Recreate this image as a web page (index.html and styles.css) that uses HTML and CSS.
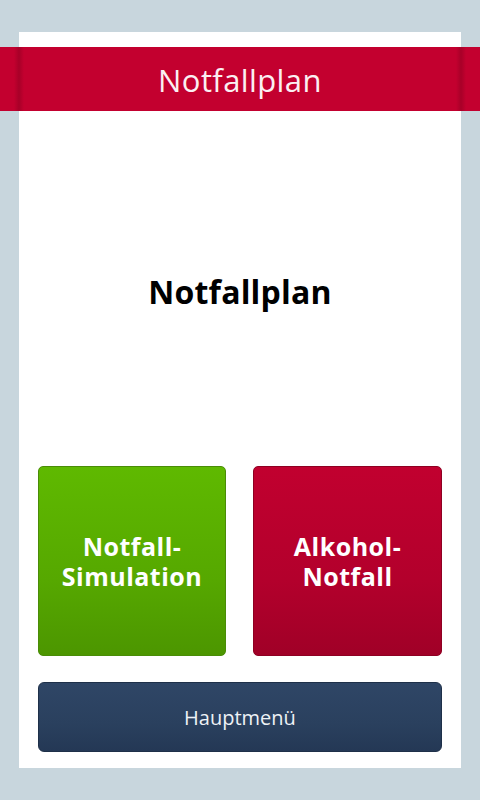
FILE: index.html
```html
<!DOCTYPE html>
<html lang="de">
<head>
  <meta charset="UTF-8">
  <meta name="viewport" content="width=device-width, initial-scale=1.0">
  <title>Notfallplan</title>
  <link rel="stylesheet" href="styles.css">
</head>
<body>
  <div class="card">
    <div class="topbar">Notfallplan</div>
    <div class="intro">
      <h1>Notfallplan</h1>
    </div>
    <div class="tiles">
      <button class="tile tile-green">Notfall-<br>Simulation</button>
      <button class="tile tile-red">Alkohol-<br>Notfall</button>
    </div>
    <button class="menu-button">Hauptmenü</button>
  </div>
</body>
</html>
```

FILE: styles.css
```css
html, body {
  margin: 0;
  height: 100%;
}

body {
  background: #c8d6dd;
  font-family: "Open Sans", "DejaVu Sans", sans-serif;
  padding: 32px 19px;
  box-sizing: border-box;
}

.card {
  background: #ffffff;
  height: 736px;
  padding: 15px 19px 0;
  box-sizing: border-box;
  display: flex;
  flex-direction: column;
}

/* rote Titelleiste, geht über den Rand der Karte hinaus */
.topbar {
  margin: 0 -38px;
  height: 64px;
  background: linear-gradient(90deg, #c3002f 0, #c3002f 14px, #a80028 19px, #c3002f 24px, #c3002f 456px, #a80028 461px, #c3002f 466px, #c3002f 100%);
  color: #fbeff2;
  font-size: 31px;
  letter-spacing: 0.4px;
  line-height: 66px;
  text-align: center;
}

.intro {
  height: 355px;
  display: flex;
  align-items: center;
  justify-content: center;
  padding-top: 6px;
  box-sizing: border-box;
}

h1 {
  margin: 0;
  font-size: 32px;
  letter-spacing: 0.2px;
  font-weight: bold;
  color: #000000;
}

.tiles {
  display: flex;
  justify-content: space-between;
}

.tile {
  width: 188px;
  height: 190px;
  border-radius: 5px;
  color: #ffffff;
  font-family: "Open Sans", "DejaVu Sans", sans-serif;
  font-size: 25px;
  letter-spacing: 0.5px;
  font-weight: bold;
  line-height: 30px;
  text-align: center;
  cursor: pointer;
}

.tile-green {
  background: linear-gradient(180deg, #5fb900 0%, #56a800 60%, #4c9600 100%);
  border: 1px solid #4a8c07;
}

.tile-red {
  width: 189px;
  background: linear-gradient(180deg, #c1002f 0%, #b3002c 60%, #a00027 100%);
  border: 1px solid #8e0022;
}

.menu-button {
  margin-top: 26px;
  height: 70px;
  border-radius: 6px;
  border: 1px solid #1e3049;
  background: linear-gradient(180deg, #2f4666 0%, #2a405e 60%, #243855 100%);
  color: #eef2f6;
  font-family: "Open Sans", "DejaVu Sans", sans-serif;
  font-size: 20px;
  cursor: pointer;
}
```
